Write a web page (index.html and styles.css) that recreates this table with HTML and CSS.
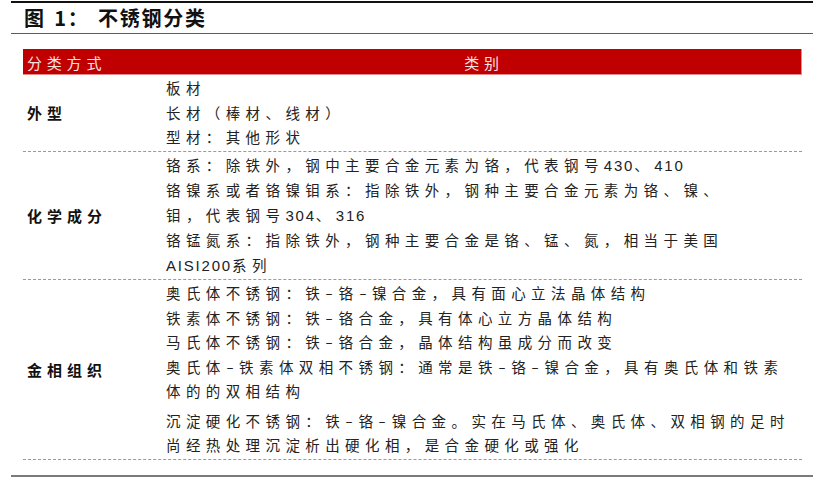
FILE: index.html
```html
<!DOCTYPE html>
<html lang="zh">
<head>
<meta charset="utf-8">
<link rel="stylesheet" href="styles.css">
</head>
<body>
<div class="report">
  <div class="fig-title"><h1>图 1： 不锈钢分类</h1></div>
  <div class="cls">
    <div class="cls-head">
      <div class="col-a">分类方式</div>
      <div class="col-b">类别</div>
    </div>
    <div class="cls-row">
      <div class="label">外型</div>
      <div class="items">
        <p>板材</p>
        <p>长材（棒材、线材）</p>
        <p>型材：其他形状</p>
      </div>
    </div>
    <div class="cls-row">
      <div class="label">化学成分</div>
      <div class="items">
        <p>铬系：除铁外，钢中主要合金元素为铬，代表钢号<span class="num">430</span>、<span class="num">410</span></p>
        <p>铬镍系或者铬镍钼系：指除铁外，钢种主要合金元素为铬、镍、<br>钼，代表钢号<span class="num">304</span>、<span class="num">316</span></p>
        <p>铬锰氮系：指除铁外，钢种主要合金是铬、锰、氮，相当于美国<br><span class="num">AISI200</span>系列</p>
      </div>
    </div>
    <div class="cls-row">
      <div class="label">金相组织</div>
      <div class="items">
        <p>奥氏体不锈钢：铁<span class="dash">-</span>铬<span class="dash">-</span>镍合金，具有面心立法晶体结构</p>
        <p>铁素体不锈钢：铁<span class="dash">-</span>铬合金，具有体心立方晶体结构</p>
        <p>马氏体不锈钢：铁<span class="dash">-</span>铬合金，晶体结构虽成分而改变</p>
        <p>奥氏体<span class="dash">-</span>铁素体双相不锈钢：通常是铁<span class="dash">-</span>铬<span class="dash">-</span>镍合金，具有奥氏体和铁素<br>体的的双相结构</p>
        <p class="gap">沉淀硬化不锈钢：铁<span class="dash">-</span>铬<span class="dash">-</span>镍合金。实在马氏体、奥氏体、双相钢的足时<br>尚经热处理沉淀析出硬化相，是合金硬化或强化</p>
      </div>
    </div>
  </div>
  <div class="foot-rule"></div>
</div>
</body>
</html>
```

FILE: styles.css
```css
html, body {
  margin: 0;
  padding: 0;
  background: #ffffff;
}

body {
  font-family: "Noto Sans CJK SC", "Noto Sans", sans-serif;
  color: #1a1a1a;
}

.report {
  width: 802px;
  margin-left: 11px;
  padding-top: 1px;
}

.fig-title {
  border-top: 2px solid #111111;
  border-bottom: 1px solid #d42a2a;
  height: 30px;
  padding-left: 13px;
  display: flex;
  align-items: center;
}

.fig-title h1 {
  margin: 0;
  font-size: 20px;
  font-weight: 700;
  letter-spacing: 1.8px;
  line-height: 1;
  word-spacing: 2px;
  color: #111111;
}

.cls {
  width: 779px;
  margin: 15px 0 0 12px;
}

.cls-head {
  display: grid;
  grid-template-columns: 137px 1fr;
  height: 26px;
  background: #c00000;
  box-shadow: inset 0 -1px 0 #e88a8a, inset -1px 0 0 #e88a8a;
  align-items: center;
  color: #f8e3e3;
  font-size: 15px;
  letter-spacing: 4.8px;
  font-weight: 400;
}

.cls-head .col-a {
  padding-left: 4px;
}

.cls-head .col-b {
  text-align: center;
  padding-left: 6px;
}

.cls-row {
  display: grid;
  grid-template-columns: 137px 1fr;
  align-items: center;
  border-bottom: 1px dashed #9a9a9a;
}

.label {
  padding-left: 4px;
  font-size: 15px;
  font-weight: 700;
  letter-spacing: 5px;
  color: #111111;
}

.items {
  padding: 1px 0 1px 6px;
}

.items p {
  margin: 0;
  font-size: 14.5px;
  line-height: 24.5px;
  letter-spacing: 5.4px;
  white-space: nowrap;
  color: #222222;
}

.items p.gap {
  margin-top: 5px;
}

.num {
  font-family: "Liberation Sans", Arial, sans-serif;
  font-size: 15px;
  letter-spacing: 1.8px;
}

.dash {
  display: inline-block;
  width: 8px;
  margin-right: 5.4px;
  text-align: center;
  letter-spacing: 0;
  line-height: 1;
  transform: scaleX(1.5);
}

.foot-rule {
  margin-top: 15px;
  height: 2px;
  background: #7a7a7a;
}
```
